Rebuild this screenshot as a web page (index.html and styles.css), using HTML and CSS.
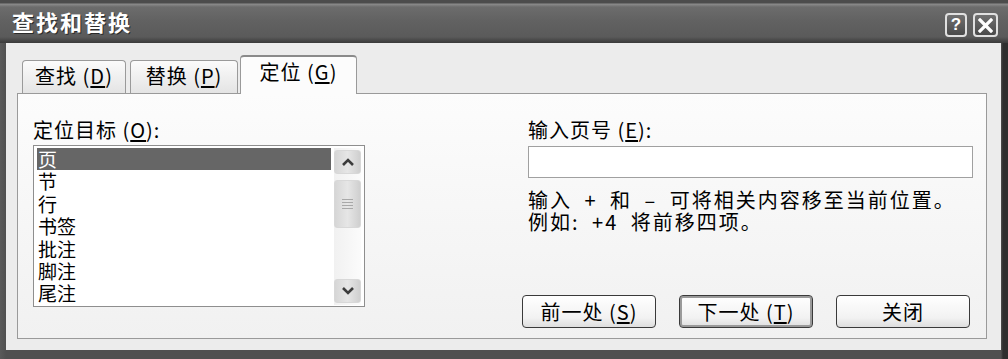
FILE: index.html
```html
<!DOCTYPE html>
<html lang="zh-CN">
<head>
    <meta charset="UTF-8">
    <title>查找和替换</title>
    <link rel="stylesheet" href="styles.css">
</head>
<body>
    <div class="window">
        <div class="titlebar">
            <span class="title">查找和替换</span>
            <div class="controls">
                <span class="cbtn help">?</span>
                <span class="cbtn close">
                    <svg width="15" height="15" viewBox="0 0 15 15">
                        <path d="M2 2 L13 13 M13 2 L2 13" stroke="#fff" stroke-width="3.2" stroke-linecap="square"/>
                    </svg>
                </span>
            </div>
        </div>

        <div class="body">
            <div class="tabs">
                <div class="tab tab-find">查找 (<u>D</u>)</div>
                <div class="tab tab-replace">替换 (<u>P</u>)</div>
                <div class="tab tab-goto active">定位 (<u>G</u>)</div>
            </div>

            <div class="panel">
                <div class="col-left">
                    <div class="label">定位目标 (<u>O</u>):</div>
                    <div class="listbox">
                        <ul class="items">
                            <li class="selected">页</li>
                            <li>节</li>
                            <li>行</li>
                            <li>书签</li>
                            <li>批注</li>
                            <li>脚注</li>
                            <li>尾注</li>
                        </ul>
                        <div class="scrollbar">
                            <div class="sb-btn">
                                <svg width="14" height="10" viewBox="0 0 14 10"><path d="M2 8 L7 3 L12 8" fill="none" stroke="#3c3c3c" stroke-width="2.6"/></svg>
                            </div>
                            <div class="sb-thumb">
                                <span></span><span></span><span></span><span></span>
                            </div>
                            <div class="sb-track"></div>
                            <div class="sb-btn">
                                <svg width="14" height="10" viewBox="0 0 14 10"><path d="M2 2 L7 7 L12 2" fill="none" stroke="#3c3c3c" stroke-width="2.6"/></svg>
                            </div>
                        </div>
                    </div>
                </div>

                <div class="col-right">
                    <div class="label">输入页号 (<u>E</u>):</div>
                    <div class="page-input"></div>
                    <div class="note">
                        <div>输入 + 和 – 可将相关内容移至当前位置。</div>
                        <div>例如: +4 将前移四项。</div>
                    </div>
                    <div class="buttons">
                        <button class="btn">前一处 (<u>S</u>)</button>
                        <button class="btn default">下一处 (<u>T</u>)</button>
                        <button class="btn">关闭</button>
                    </div>
                </div>
            </div>
        </div>
    </div>
</body>
</html>
```

FILE: styles.css
```css
body {
    margin: 0;
    font-family: "Noto Sans CJK SC", "Liberation Sans", sans-serif;
    color: #000;
}

.window {
    width: 1008px;
    height: 359px;
    box-sizing: border-box;
    display: flex;
    flex-direction: column;
    background: linear-gradient(90deg, #5a5a5a 0, #505050 6px, #505050 1001px, #2e2e2e 1003px);
    overflow: hidden;
}

/* title bar */
.titlebar {
    height: 43px;
    flex: none;
    display: flex;
    align-items: center;
    padding: 0 10px 0 12px;
    background: linear-gradient(#4c4c4c 0, #4c4c4c 3px, #8c8c8c 4px, #6c6c6c 7px, #626262 20px, #5a5a5a 37px, #444 41px, #3a3a3a 43px);
}

.title {
    color: #fff;
    font-size: 22px;
    font-weight: bold;
    letter-spacing: 2px;
    text-shadow: 1px 1px 0 #2a2a2a;
    margin-top: -2px;
}

.controls {
    margin-left: auto;
    display: flex;
    gap: 6px;
    margin-top: 7px;
}

.cbtn {
    height: 24px;
    box-sizing: border-box;
    border: 2px solid #e0e0e0;
    border-radius: 4px;
    background: linear-gradient(#707070, #4a4a4a);
    display: flex;
    align-items: center;
    justify-content: center;
    color: #fff;
    font-family: "Liberation Sans", sans-serif;
    font-weight: bold;
    font-size: 17px;
}

.help {
    width: 22px;
}

.close {
    width: 25px;
}

/* dialog body */
.body {
    flex: 1;
    margin: 0 7px 9px 6px;
    padding: 0 14px 0 11px;
    background: #ececec;
    display: flex;
    flex-direction: column;
}

.tabs {
    display: flex;
    align-items: flex-end;
    height: 38px;
    margin-top: 12px;
    padding-left: 5px;
}

.tab {
    height: 33px;
    box-sizing: border-box;
    border: 1px solid #9a9a9a;
    border-bottom: none;
    border-radius: 4px 4px 0 0;
    background: linear-gradient(#fbfbfb, #e4e4e4);
    font-size: 20px;
    letter-spacing: 1px;
    line-height: 30px;
    text-align: center;
}

.tab-find {
    width: 104px;
    margin-right: 4px;
}

.tab-replace {
    width: 108px;
}

.tab-goto {
    width: 117px;
    margin-left: 2px;
}

.tab.active {
    height: 39px;
    margin-bottom: -1px;
    background: #fcfcfc;
    border-top: 2px solid #8a8a8a;
    line-height: 30px;
    position: relative;
    z-index: 1;
}

u {
    text-decoration: underline;
    text-underline-offset: 2px;
}

/* tab page */
.panel {
    height: 246px;
    box-sizing: border-box;
    border: 1px solid #9a9a9a;
    background: linear-gradient(#fcfcfc, #f1f1f1);
    display: flex;
    padding: 25px 13px 10px 15px;
}

.label {
    font-size: 20px;
    letter-spacing: 1px;
    line-height: 22px;
}

.col-left {
    width: 332px;
}

.listbox {
    margin-top: 4px;
    height: 162px;
    box-sizing: border-box;
    border: 1px solid #8e8e8e;
    background: #fff;
    display: flex;
    padding: 2px 3px 1px 3px;
    gap: 3px;
}

.items {
    flex: 1;
    margin: 0;
    padding: 0;
    list-style: none;
    font-size: 19px;
    line-height: 22.4px;
}

.items li {
    height: 22.4px;
    padding-left: 1px;
}

.items li.selected {
    background: #666;
    color: #fff;
}

.scrollbar {
    width: 27px;
    display: flex;
    flex-direction: column;
    background: linear-gradient(90deg, #f1f1f1, #fbfbfb);
    padding: 2px 0;
    box-sizing: border-box;
}

.sb-btn,
.sb-thumb {
    box-sizing: border-box;
    border: 1px solid #d8d8d8;
    border-radius: 3px;
    background: linear-gradient(90deg, #d6d6d6, #e6e6e6 50%, #cfcfcf);
    display: flex;
    align-items: center;
    justify-content: center;
}

.sb-btn {
    height: 24px;
}

.sb-thumb {
    height: 48px;
    margin-top: 6px;
    flex-direction: column;
    gap: 2px;
}

.sb-thumb span {
    width: 11px;
    height: 1px;
    background: #a8a8a8;
}

.sb-track {
    flex: 1;
}

.col-right {
    margin-left: auto;
    width: 445px;
    display: flex;
    flex-direction: column;
}

.page-input {
    margin-top: 5px;
    height: 32px;
    box-sizing: border-box;
    border: 1px solid #a0a0a0;
    background: #fff;
}

.note {
    margin-top: 11px;
    font-size: 20px;
    letter-spacing: 2px;
    word-spacing: 6px;
    line-height: 22px;
}

.buttons {
    margin-top: auto;
    margin-left: -6px;
    display: flex;
    gap: 23px;
}

.btn {
    width: 134px;
    height: 33px;
    border: 1px solid #3a3a3a;
    border-radius: 4px;
    background: linear-gradient(#ffffff, #f2f2f2 70%, #dedede);
    font-family: "Noto Sans CJK SC", "Liberation Sans", sans-serif;
    font-size: 20px;
    letter-spacing: 1px;
    line-height: 1;
    color: #000;
    padding: 0;
}

.btn.default {
    box-shadow: inset 0 0 0 2px #9a9a9a;
}
```
